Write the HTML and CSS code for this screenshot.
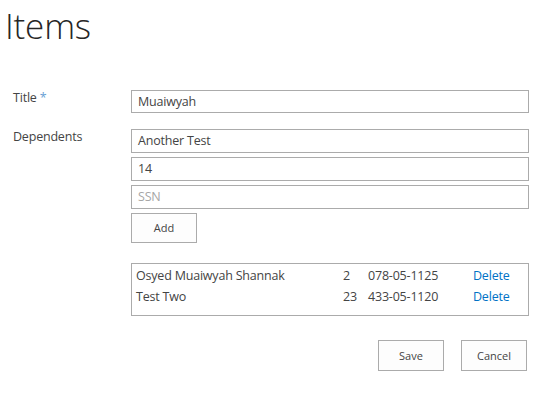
FILE: index.html
```html
<!DOCTYPE html>
<html>
<head>
<meta charset="utf-8">
<link rel="stylesheet" href="styles.css">
</head>
<body>
<div class="page">
  <h1 class="title">Items</h1>
  <div class="form">
    <div class="row row-title">
      <div class="label">Title <span class="req">*</span></div>
      <div class="field">
        <div class="input">Muaiwyah</div>
      </div>
    </div>
    <div class="row row-deps">
      <div class="label">Dependents</div>
      <div class="field">
        <div class="stack">
          <div class="input">Another Test</div>
          <div class="input">14</div>
          <div class="input placeholder">SSN</div>
        </div>
        <div class="btn btn-add">Add</div>
        <div class="list">
          <div class="item"><span class="c-name">Osyed Muaiwyah Shannak</span><span class="c-age">2</span><span class="c-ssn">078-05-1125</span><span class="c-del">Delete</span></div>
          <div class="item"><span class="c-name">Test Two</span><span class="c-age">23</span><span class="c-ssn">433-05-1120</span><span class="c-del">Delete</span></div>
        </div>
      </div>
    </div>
    <div class="actions">
      <div class="btn">Save</div>
      <div class="btn">Cancel</div>
    </div>
  </div>
</div>
</body>
</html>
```
FILE: styles.css
```css
html, body {
  margin: 0;
  padding: 0;
  background: #ffffff;
}
body {
  font-family: "Open Sans", "Noto Sans", "Liberation Sans", sans-serif;
  font-size: 12.5px;
  letter-spacing: -0.2px;
  color: #444444;
}
.page {
  padding: 0 0 0 5px;
}
.title {
  margin: 0;
  padding-top: 4px;
  font-size: 35px;
  font-weight: 300;
  line-height: 44px;
  color: #262626;
  letter-spacing: -0.2px;
}
.form {
  padding: 0 0 0 8px;
  width: 515px;
}
.row {
  display: grid;
  grid-template-columns: 118px 398px;
}
.row-title {
  margin-top: 42px;
}
.row-deps {
  margin-top: 16px;
}
.label {
  line-height: 18px;
  margin-top: -1px;
  color: #444444;
}
.req {
  color: #6a9fd4;
}
.input {
  box-sizing: border-box;
  height: 23px;
  border: 1px solid #ababab;
  padding: 0 6px;
  line-height: 21px;
  color: #444444;
}
.placeholder {
  color: #a6a6a6;
}
.stack {
  display: flex;
  flex-direction: column;
  gap: 4px;
}
.stack .input {
  height: 24px;
  line-height: 22px;
}
.btn {
  box-sizing: border-box;
  width: 66px;
  height: 31px;
  border: 1px solid #ababab;
  background: #fdfdfd;
  font-size: 11px;
  letter-spacing: 0;
  line-height: 29px;
  text-align: center;
  color: #444444;
}
.btn-add {
  margin-top: 4px;
  height: 30px;
  line-height: 28px;
}
.list {
  box-sizing: border-box;
  margin-top: 20px;
  border: 1px solid #ababab;
  padding: 1px 0 8px 4px;
}
.item {
  display: flex;
  height: 21px;
  line-height: 21px;
}
.c-name {
  width: 207px;
}
.c-age {
  width: 25px;
}
.c-ssn {
  width: 105px;
}
.c-del {
  color: #0072c6;
}
.actions {
  display: flex;
  justify-content: flex-end;
  gap: 17px;
  margin-top: 24px;
  padding-right: 1px;
}
```
